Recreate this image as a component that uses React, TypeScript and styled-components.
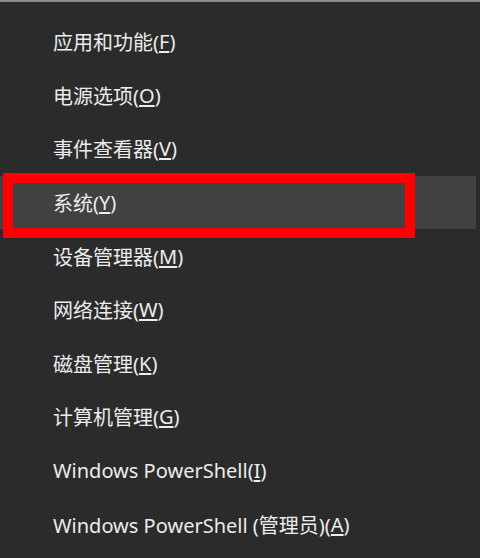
import styled, { createGlobalStyle } from "styled-components";

const GlobalStyle = createGlobalStyle`
    html, body {
        margin: 0;
        padding: 0;
        background: #2b2b2b;
    }
`;

const Menu = styled.ul`
    list-style: none;
    margin: 0;
    padding: 13px 4px 0 0;
    height: 558px;
    box-sizing: border-box;
    border-top: 2px solid #8c8c8c;
    background: #2b2b2b;
    display: flex;
    flex-direction: column;
    font-family: "Noto Sans", "Noto Sans CJK SC", sans-serif;
    font-size: 20px;
    color: #ececec;
`;

const Item = styled.li<{ $active?: boolean }>`
    position: relative;
    height: 53.6px;
    display: flex;
    align-items: center;
    padding-left: 53px;
    background: ${(p) => (p.$active ? "#414141" : "transparent")};
    white-space: nowrap;
`;

const Key = styled.u`
    text-decoration: underline;
    text-underline-offset: 2px;
`;

const Mark = styled.span`
    position: absolute;
    left: 3px;
    top: -3px;
    width: 412px;
    height: 65px;
    box-sizing: border-box;
    border: 10px solid #ff0000;
    pointer-events: none;
`;

const items = [
    { label: "应用和功能", key: "F" },
    { label: "电源选项", key: "O" },
    { label: "事件查看器", key: "V" },
    { label: "系统", key: "Y", active: true },
    { label: "设备管理器", key: "M" },
    { label: "网络连接", key: "W" },
    { label: "磁盘管理", key: "K" },
    { label: "计算机管理", key: "G" },
    { label: "Windows PowerShell", key: "I" },
    { label: "Windows PowerShell (管理员)", key: "A" },
];

const App = () => {
    return (
        <>
            <GlobalStyle />
            <Menu>
                {items.map((item) => (
                    <Item key={item.key} $active={item.active}>
                        {item.label}(<Key>{item.key}</Key>)
                        {item.active && <Mark />}
                    </Item>
                ))}
            </Menu>
        </>
    );
};

export default App;
